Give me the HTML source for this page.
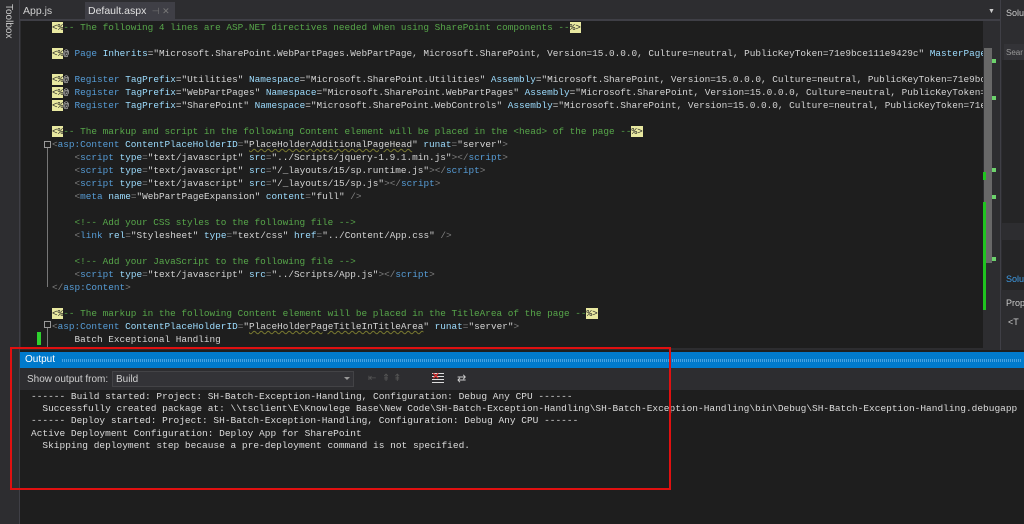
<!DOCTYPE html>
<html><head><meta charset="utf-8"><style>
*{margin:0;padding:0;box-sizing:border-box}
html,body{overflow:hidden}
body{width:1024px;height:524px;overflow:hidden;background:#2d2d30;position:relative;font-family:"Liberation Sans",sans-serif}
.abs{position:absolute}
pre{font-family:"Liberation Mono",monospace;font-size:9.4px;line-height:13px;white-space:pre}
.c{color:#57a64a}.t{color:#569cd6}.a{color:#9cdcfe}.s{color:#d4d4d4}.g{color:#808080}
.d{background:#e8e8a0;color:#222}
.u{text-decoration:underline wavy #7a7a30}
</style></head><body>
<div class="abs" style="left:0;top:0;width:20px;height:524px;background:#2d2d30;border-right:1px solid #3f3f46"></div>
<div class="abs" style="left:3px;top:4px;color:#c8c8c8;font-size:10px;writing-mode:vertical-rl">Toolbox</div>
<div class="abs" style="left:20px;top:0;width:980px;height:19px;background:#2d2d30"></div>
<div class="abs" style="left:23px;top:5px;color:#d0d0d0;font-size:10.5px">App.js</div>
<div class="abs" style="left:85px;top:2px;width:90px;height:17px;background:#3f3f46"></div>
<div class="abs" style="left:88px;top:5px;color:#e0e0e0;font-size:10.5px">Default.aspx <span style="color:#777;font-size:9px">&nbsp;⊣ ✕</span></div>
<div class="abs" style="left:20px;top:19px;width:980px;height:2px;background:#3f3f46"></div>
<div class="abs" style="left:988px;top:8px;color:#ccc;font-size:7px">▼</div>
<div class="abs" style="left:21px;top:21px;width:962px;height:327px;background:#1e1e1e"></div>
<div class="abs" style="left:37px;top:332px;width:4px;height:13px;background:#2ed12e"></div>
<div class="abs" style="left:52px;top:21px;width:931px;height:327px;overflow:hidden">
<pre style="color:#d4d4d4"><span class="d">&lt;%</span><span class="c">-- The following 4 lines are ASP.NET directives needed when using SharePoint components --</span><span class="d">%&gt;</span>

<span class="d">&lt;%</span>@ <span class="t">Page</span> <span class="a">Inherits</span>=<span class="s">"Microsoft.SharePoint.WebPartPages.WebPartPage, Microsoft.SharePoint, Version=15.0.0.0, Culture=neutral, PublicKeyToken=71e9bce111e9429c"</span> <span class="a">MasterPageFile</span>

<span class="d">&lt;%</span>@ <span class="t">Register</span> <span class="a">TagPrefix</span>="Utilities" <span class="a">Namespace</span>="Microsoft.SharePoint.Utilities" <span class="a">Assembly</span>="Microsoft.SharePoint, Version=15.0.0.0, Culture=neutral, PublicKeyToken=71e9bce111e9429c"
<span class="d">&lt;%</span>@ <span class="t">Register</span> <span class="a">TagPrefix</span>="WebPartPages" <span class="a">Namespace</span>="Microsoft.SharePoint.WebPartPages" <span class="a">Assembly</span>="Microsoft.SharePoint, Version=15.0.0.0, Culture=neutral, PublicKeyToken=71e9bce111e9429c"
<span class="d">&lt;%</span>@ <span class="t">Register</span> <span class="a">TagPrefix</span>="SharePoint" <span class="a">Namespace</span>="Microsoft.SharePoint.WebControls" <span class="a">Assembly</span>="Microsoft.SharePoint, Version=15.0.0.0, Culture=neutral, PublicKeyToken=71e9bce111e9429c"

<span class="d">&lt;%</span><span class="c">-- The markup and script in the following Content element will be placed in the &lt;head&gt; of the page --</span><span class="d">%&gt;</span>
<span class="g">&lt;</span><span class="t">asp:Content</span> <span class="a">ContentPlaceHolderID</span><span class="g">=</span>"<span class="u">PlaceHolderAdditionalPageHead</span>" <span class="a">runat</span><span class="g">=</span>"server"<span class="g">&gt;</span>
    <span class="g">&lt;</span><span class="t">script</span> <span class="a">type</span><span class="g">=</span>"text/javascript" <span class="a">src</span><span class="g">=</span>"../Scripts/jquery-1.9.1.min.js"<span class="g">&gt;&lt;/</span><span class="t">script</span><span class="g">&gt;</span>
    <span class="g">&lt;</span><span class="t">script</span> <span class="a">type</span><span class="g">=</span>"text/javascript" <span class="a">src</span><span class="g">=</span>"/_layouts/15/sp.runtime.js"<span class="g">&gt;&lt;/</span><span class="t">script</span><span class="g">&gt;</span>
    <span class="g">&lt;</span><span class="t">script</span> <span class="a">type</span><span class="g">=</span>"text/javascript" <span class="a">src</span><span class="g">=</span>"/_layouts/15/sp.js"<span class="g">&gt;&lt;/</span><span class="t">script</span><span class="g">&gt;</span>
    <span class="g">&lt;</span><span class="t">meta</span> <span class="a">name</span><span class="g">=</span>"WebPartPageExpansion" <span class="a">content</span><span class="g">=</span>"full" <span class="g">/&gt;</span>

    <span class="c">&lt;!-- Add your CSS styles to the following file --&gt;</span>
    <span class="g">&lt;</span><span class="t">link</span> <span class="a">rel</span><span class="g">=</span>"Stylesheet" <span class="a">type</span><span class="g">=</span>"text/css" <span class="a">href</span><span class="g">=</span>"../Content/App.css" <span class="g">/&gt;</span>

    <span class="c">&lt;!-- Add your JavaScript to the following file --&gt;</span>
    <span class="g">&lt;</span><span class="t">script</span> <span class="a">type</span><span class="g">=</span>"text/javascript" <span class="a">src</span><span class="g">=</span>"../Scripts/App.js"<span class="g">&gt;&lt;/</span><span class="t">script</span><span class="g">&gt;</span>
<span class="g">&lt;/</span><span class="t">asp:Content</span><span class="g">&gt;</span>

<span class="d">&lt;%</span><span class="c">-- The markup in the following Content element will be placed in the TitleArea of the page --</span><span class="d">%&gt;</span>
<span class="g">&lt;</span><span class="t">asp:Content</span> <span class="a">ContentPlaceHolderID</span><span class="g">=</span>"<span class="u">PlaceHolderPageTitleInTitleArea</span>" <span class="a">runat</span><span class="g">=</span>"server"<span class="g">&gt;</span>
    Batch Exceptional Handling</pre>
</div>
<div class="abs" style="left:44px;top:141px;width:7px;height:7px;border:1px solid #999"></div>
<div class="abs" style="left:47px;top:148px;width:1px;height:139px;background:#777"></div>
<div class="abs" style="left:44px;top:321px;width:7px;height:7px;border:1px solid #999"></div>
<div class="abs" style="left:47px;top:328px;width:1px;height:20px;background:#777"></div>
<div class="abs" style="left:983px;top:21px;width:17px;height:327px;background:#2d2d30"></div>
<div class="abs" style="left:984px;top:48px;width:8px;height:215px;background:#686868"></div>
<div class="abs" style="left:983px;top:202px;width:3px;height:108px;background:#1fc41f"></div>
<div class="abs" style="left:983px;top:172px;width:3px;height:8px;background:#1fc41f"></div>
<div class="abs" style="left:992px;top:59px;width:4px;height:4px;background:#6cd36c"></div>
<div class="abs" style="left:992px;top:96px;width:4px;height:4px;background:#6cd36c"></div>
<div class="abs" style="left:992px;top:168px;width:4px;height:4px;background:#6cd36c"></div>
<div class="abs" style="left:992px;top:195px;width:4px;height:4px;background:#6cd36c"></div>
<div class="abs" style="left:992px;top:257px;width:4px;height:4px;background:#6cd36c"></div>
<div class="abs" style="left:1000px;top:0;width:24px;height:350px;background:#2d2d30;border-left:1px solid #3f3f46"></div>
<div class="abs" style="left:1004px;top:44px;width:20px;height:16px;background:#333337"></div>
<div class="abs" style="left:1006px;top:8px;color:#ccc;font-size:9px">Solu</div>
<div class="abs" style="left:1006px;top:48px;color:#999;font-size:8px">Sear</div>
<div class="abs" style="left:1002px;top:60px;width:22px;height:163px;background:#252526"></div>
<div class="abs" style="left:1002px;top:240px;width:22px;height:50px;background:#252526"></div>
<div class="abs" style="left:1006px;top:274px;color:#3e9ce6;font-size:9px">Solu</div>
<div class="abs" style="left:1006px;top:298px;color:#ccc;font-size:9px">Prop</div>
<div class="abs" style="left:1008px;top:317px;color:#ccc;font-size:9px">&lt;T</div>
<div class="abs" style="left:20px;top:350px;width:1004px;height:174px;background:#1e1e1e"></div>
<div class="abs" style="left:20px;top:352px;width:1004px;height:16px;background:#007acc"></div>
<div class="abs" style="left:25px;top:354px;color:#fff;font-size:10px">Output</div>
<div class="abs" style="left:62px;top:359px;width:960px;height:3px;background:repeating-linear-gradient(90deg,#4aa3e0 0 1px,transparent 1px 2px)"></div>
<div class="abs" style="left:20px;top:368px;width:1004px;height:22px;background:#2d2d30"></div>
<div class="abs" style="left:27px;top:374px;color:#d0d0d0;font-size:10px">Show output from:</div>
<div class="abs" style="left:112px;top:371px;width:242px;height:16px;background:#333337;border:1px solid #434346"></div>
<div class="abs" style="left:116px;top:374px;color:#d0d0d0;font-size:10px">Build</div>
<div class="abs" style="left:344px;top:377px;border:3px solid transparent;border-top-color:#999"></div>
<div class="abs" style="left:368px;top:373px;color:#555;font-size:10px">⇤ &nbsp;⇞ ⇞</div>
<div class="abs" style="left:432px;top:373px;width:12px;height:12px;background:repeating-linear-gradient(180deg,#ddd 0 1px,transparent 1px 3px)"></div>
<div class="abs" style="left:432px;top:371px;color:#e03030;font-size:9px;font-weight:bold">✕</div>
<div class="abs" style="left:457px;top:372px;color:#ccc;font-size:11px">⇄</div>
<div class="abs" style="left:31px;top:391px;width:993px;height:80px;overflow:hidden">
<pre style="color:#dcdcdc;line-height:12.2px;font-size:9.5px">------ Build started: Project: SH-Batch-Exception-Handling, Configuration: Debug Any CPU ------
  Successfully created package at: \\tsclient\E\Knowlege Base\New Code\SH-Batch-Exception-Handling\SH-Batch-Exception-Handling\bin\Debug\SH-Batch-Exception-Handling.debugapp
------ Deploy started: Project: SH-Batch-Exception-Handling, Configuration: Debug Any CPU ------
Active Deployment Configuration: Deploy App for SharePoint
  Skipping deployment step because a pre-deployment command is not specified.</pre>
</div>
<div class="abs" style="left:10px;top:347px;width:661px;height:143px;border:2px solid #e01010"></div>
</body></html>
